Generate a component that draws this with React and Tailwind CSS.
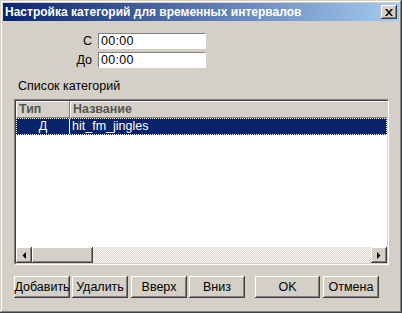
import React from 'react';

// Raised / sunken bevels in the classic Win2000 look
const RAISED = 'shadow-[inset_-1px_-1px_#404040,inset_1px_1px_#ffffff,inset_-2px_-2px_#808080]';
const FONT = "font-['Liberation_Sans',Arial,sans-serif]";

function Arrow({ dir }) {
  return (
    <svg width="4" height="7" viewBox="0 0 4 7">
      {dir === 'left'
        ? <path d="M4 0 L4 7 L0.5 3.5 Z" fill="#000" />
        : <path d="M0 0 L0 7 L3.5 3.5 Z" fill="#000" />}
    </svg>
  );
}

function TimeField({ label, value }) {
  return (
    <div className="flex h-[16px] items-center">
      <div className="w-[95px] pr-[6px] text-right text-[12.5px] leading-none text-black">{label}</div>
      <div className="flex h-[16px] w-[108px] items-center border-t border-l border-t-[#808080] border-l-[#808080] border-b border-r border-b-white border-r-white bg-white pl-[2px] text-[12.5px] tracking-[0.3px] text-black">
        {value}
      </div>
    </div>
  );
}

function Button({ children, width = 'w-[56px]' }) {
  return (
    <button className={`${width} h-[22px] bg-[#d4d0c8] ${RAISED} flex items-center justify-center text-[12.5px] text-black whitespace-nowrap overflow-visible`}>
      {children}
    </button>
  );
}

const ROWS = [{ type: 'Д', name: 'hit_fm_jingles' }];

export default function App() {
  return (
    <div className={`${FONT} w-[402px] h-[313px] bg-[#d4d0c8] p-[3px] flex flex-col shadow-[inset_-1px_-1px_#404040,inset_1px_1px_#d4d0c8,inset_-2px_-2px_#808080,inset_2px_2px_#ffffff]`}>
      {/* Title bar */}
      <div className="h-[18px] flex items-center justify-between bg-[linear-gradient(to_right,#0a246a,#a6caf0)] pl-[2px] pr-[2px]">
        <span className="text-white font-bold text-[12px] leading-none">Настройка категорий для временных интервалов</span>
        <div className={`w-[16px] h-[14px] bg-[#d4d0c8] ${RAISED} flex items-center justify-center`}>
          <svg width="8" height="7" viewBox="0 0 8 7">
            <path d="M0 0 H2 L4 2.5 L6 0 H8 L5 3.5 L8 7 H6 L4 4.5 L2 7 H0 L3 3.5 Z" fill="#000" />
          </svg>
        </div>
      </div>

      {/* Body */}
      <div className="flex flex-col pt-[12px]">
        <div className="flex flex-col gap-[3px]">
          <TimeField label="С" value="00:00" />
          <TimeField label="До" value="00:00" />
        </div>

        <div className="mt-[11px] ml-[15px] h-[14px] text-[12.5px] leading-[14px] text-black">Список категорий</div>

        {/* Category list */}
        <div className="mt-[6px] ml-[11px] w-[375px] h-[166px] border border-t-[#808080] border-l-[#808080] border-b-white border-r-white">
          <div className="h-full flex flex-col border border-t-[#404040] border-l-[#404040] border-b-[#d4d0c8] border-r-[#d4d0c8] bg-white">
            <div className="h-[17px] flex bg-[#d4d0c8] text-[12.5px] font-bold text-[#555555]">
              <div className="w-[54px] flex items-center px-[2px] border-t border-l border-t-white border-l-white border-b border-r border-b-[#808080] border-r-[#808080]">Тип</div>
              <div className="flex-1 flex items-center px-[2px] border-t border-l border-t-white border-l-white border-b border-b-[#808080]">Название</div>
            </div>
            {ROWS.map(r => (
              <div key={r.name} className="h-[17px] flex bg-[#0a246a] border border-dotted border-white text-[12.5px] text-white">
                <div className="w-[53px] flex items-center justify-center border-r border-white">{r.type}</div>
                <div className="flex-1 flex items-center pl-[2px]">{r.name}</div>
              </div>
            ))}
            <div className="flex-1" />
            {/* Horizontal scrollbar */}
            <div className="h-[16px] flex">
              <div className={`w-[16px] h-[16px] bg-[#d4d0c8] ${RAISED} flex items-center justify-center`}>
                <Arrow dir="left" />
              </div>
              <div className={`w-[61px] h-[16px] bg-[#d4d0c8] ${RAISED}`} />
              <div className="flex-1 bg-[repeating-conic-gradient(#d4d0c8_0_25%,#ffffff_0_50%)] bg-[length:2px_2px]" />
              <div className={`w-[16px] h-[16px] bg-[#d4d0c8] ${RAISED} flex items-center justify-center`}>
                <Arrow dir="right" />
              </div>
            </div>
          </div>
        </div>

        {/* Buttons */}
        <div className="mt-[11px] ml-[11px] flex">
          <Button>Добавить</Button>
          <div className="ml-[2px]"><Button>Удалить</Button></div>
          <div className="ml-[3px]"><Button>Вверх</Button></div>
          <div className="ml-[2px]"><Button>Вниз</Button></div>
          <div className="ml-[10px]"><Button width="w-[65px]">OK</Button></div>
          <div className="ml-[3px]"><Button>Отмена</Button></div>
        </div>
      </div>
    </div>
  );
}
